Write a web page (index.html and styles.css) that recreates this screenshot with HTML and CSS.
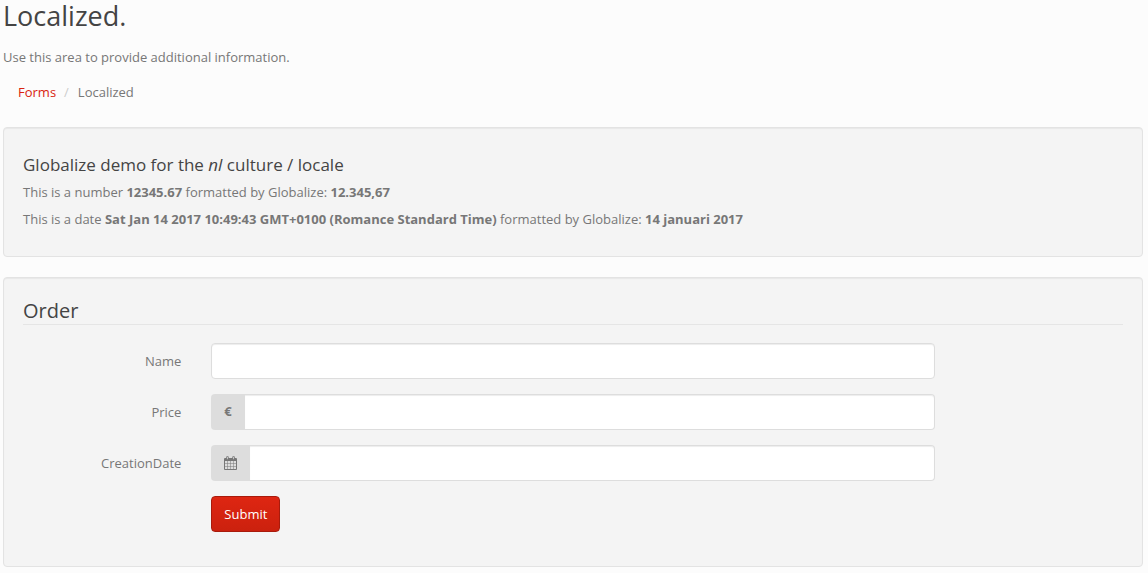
FILE: index.html
```html
<!DOCTYPE html>
<html lang="en">
<head>
<meta charset="utf-8">
<title>Localized</title>
<link rel="stylesheet" href="styles.css">
</head>
<body>
<main class="container">
  <h2 class="page-title">Localized.</h2>
  <p>Use this area to provide additional information.</p>
  <nav>
    <ol class="breadcrumb">
      <li><a href="#">Forms</a></li>
      <li>Localized</li>
    </ol>
  </nav>
  <section class="well">
    <h4 class="well-title">Globalize demo for the <em>nl</em> culture / locale</h4>
    <p>This is a number <strong>12345.67</strong> formatted by Globalize: <strong>12.345,67</strong></p>
    <p>This is a date <strong>Sat Jan 14 2017 10:49:43 GMT+0100 (Romance Standard Time)</strong> formatted by Globalize: <strong>14 januari 2017</strong></p>
  </section>
  <form class="well">
    <h3 class="legend">Order</h3>
    <div class="form-group">
      <label class="form-label" for="name">Name</label>
      <div class="form-field"><input class="form-control" id="name" type="text"></div>
    </div>
    <div class="form-group">
      <label class="form-label" for="price">Price</label>
      <div class="form-field">
        <div class="input-group">
          <span class="addon addon-text">€</span>
          <input class="form-control" id="price" type="text">
        </div>
      </div>
    </div>
    <div class="form-group">
      <label class="form-label" for="creation-date">CreationDate</label>
      <div class="form-field">
        <div class="input-group">
          <span class="addon">
            <svg width="13" height="14" viewBox="0 0 13 14" aria-hidden="true">
              <path fill="none" stroke="currentColor" stroke-opacity=".5" d="M1 7.500h11M1 10.500h11M3.500 5v8M6.500 5v8M9.500 5v8"/>
              <path fill="none" stroke="currentColor" d="M.5 4v9.500h12V4"/>
              <path fill="currentColor" d="M0 3a1 1 0 0 1 1-1h11a1 1 0 0 1 1 1v2H0zM2.200 1a.8.8 0 0 1 .8-.8h.9a.8.8 0 0 1 .8.8v2.500H2.200zM8.300 1a.8.8 0 0 1 .8-.8h.9a.8.8 0 0 1 .8.8v2.500H8.300z"/>
              <path stroke="#ddd" stroke-width=".8" d="M3.450 1v2.200M9.550 1v2.200"/>
            </svg>
          </span>
          <input class="form-control" id="creation-date" type="text">
        </div>
      </div>
    </div>
    <div class="form-group">
      <div class="form-field form-field-offset"><button class="btn" type="submit">Submit</button></div>
    </div>
  </form>
</main>
</body>
</html>
```
FILE: styles.css
```css
*, *::before, *::after { box-sizing: border-box; }

body {
  margin: 0;
  background: #fcfcfc;
  color: #777;
  font: 13px/18px "Open Sans", "Liberation Sans", sans-serif;
}

.container { padding: 0 5px 0 3px; }

p { margin: 0 0 9px; }

h2, h3, h4 { color: #444; font-weight: 400; }

.page-title { margin: 0 0 16px; font-size: 27px; line-height: 32px; }

a { color: #d9230f; text-decoration: none; }

.breadcrumb {
  display: flex;
  margin: 0 0 18px;
  padding: 8px 15px;
  list-style: none;
}

.breadcrumb li + li::before { content: "/"; padding: 0 9px 0 8px; color: #ccc; }

.well {
  margin-bottom: 20px;
  padding: 19px;
  background: #f4f4f4;
  border: 1px solid #e3e3e3;
  border-radius: 4px;
  box-shadow: inset 0 1px 1px rgba(0, 0, 0, .05);
}

.well-title { margin: 9px 0; font-size: 17px; line-height: 18px; }

.legend {
  margin: 0 0 18px;
  border-bottom: 1px solid #e5e5e5;
  font-size: 20px;
  line-height: 27px;
}

.form-group { display: flex; margin: 0 -15px 15px; }

.form-label { width: 16.6667%; padding: 9px 15px; text-align: right; }

.form-field { width: 66.6667%; padding: 0 15px; }

.form-field-offset { margin-left: 16.6667%; }

.form-control {
  display: block;
  width: 100%;
  height: 36px;
  padding: 8px 12px;
  background: #fff;
  border: 1px solid #ddd;
  border-radius: 4px;
  box-shadow: inset 0 1px 1px rgba(0, 0, 0, .075);
  color: #777;
  font: inherit;
}

.input-group { display: flex; }

.input-group .form-control {
  flex: 1;
  border-left: 0;
  border-radius: 0 4px 4px 0;
}

.addon {
  display: flex;
  align-items: center;
  padding: 0 13px;
  background: #ddd;
  border-radius: 4px 0 0 4px;
}

.addon-text { padding-bottom: 2px; font-weight: 700; }

.btn {
  display: block;
  height: 36px;
  padding: 0 12px;
  background: linear-gradient(#de2612, #cb210e);
  border: 1px solid #a91b0c;
  border-radius: 4px;
  color: #fff;
  font: inherit;
}
```
